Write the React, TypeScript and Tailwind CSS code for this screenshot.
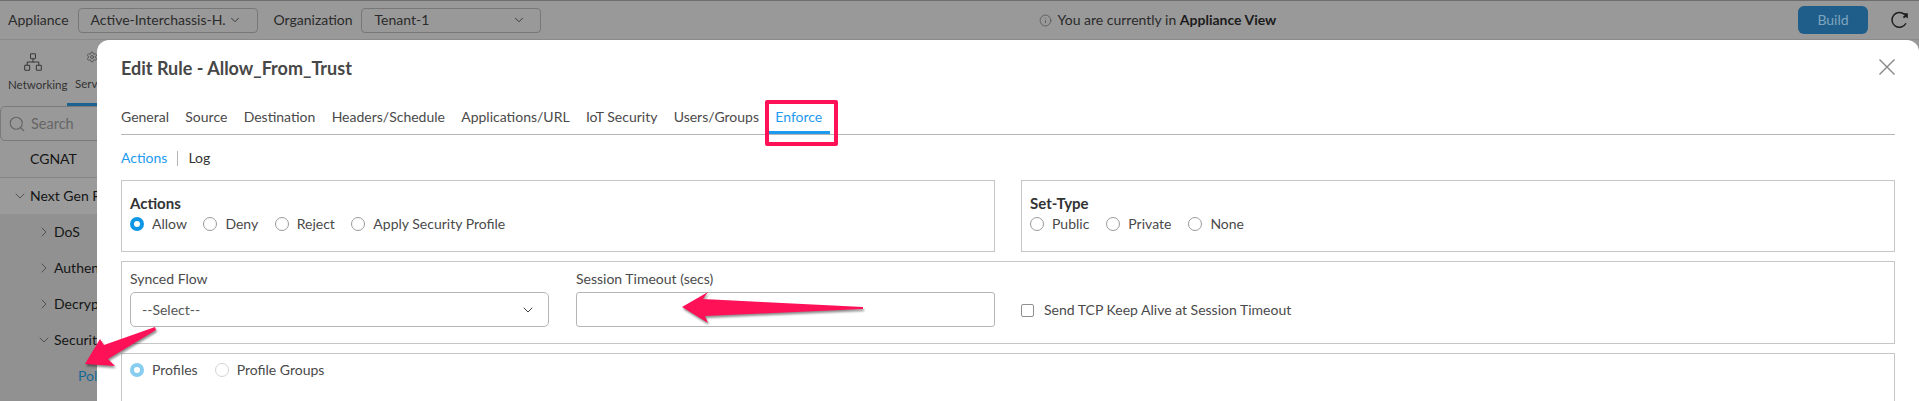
import React from 'react';
import { ChevronDown, ChevronRight, Info, Network, Search, Settings } from 'lucide-react';

const Radio = ({ label, checked, disabled }: { label: string; checked?: boolean; disabled?: boolean }) => (
  <label className="flex items-center gap-2">
    {checked ? (
      <span className={`flex h-3.5 w-3.5 items-center justify-center rounded-full ${disabled ? 'bg-[#87cdf0]' : 'bg-[#0f97e6]'}`}>
        <span className="h-[6px] w-[6px] rounded-full bg-white" />
      </span>
    ) : (
      <span className={`h-3.5 w-3.5 rounded-full border bg-white ${disabled ? 'border-[#d4d4d4]' : 'border-[#9a9a9a]'}`} />
    )}
    <span className="text-[#4a4a4a]">{label}</span>
  </label>
);

const SideRow = ({ label, open, indent }: { label: string; open?: boolean; indent?: boolean }) => (
  <div className={`flex h-9 items-center whitespace-nowrap text-[#151515] ${indent ? 'pl-[36px]' : 'pl-[12px]'}`}>
    {open ? (
      <ChevronDown className="mr-[2px] h-4 w-4 shrink-0 text-[#444]" strokeWidth={1.25} />
    ) : (
      <ChevronRight className="mr-[2px] h-4 w-4 shrink-0 text-[#444]" strokeWidth={1.25} />
    )}
    {label}
  </div>
);

const tabs = ['General', 'Source', 'Destination', 'Headers/Schedule', 'Applications/URL', 'IoT Security', 'Users/Groups'];

export default function App() {
  return (
    <div className="relative h-[401px] w-full overflow-hidden bg-[#999999] font-['Lato',sans-serif] text-[14px] leading-5">
      {/* page behind the dialog */}
      <header className="flex h-10 items-center border-t border-t-[#6e6e6e] border-b border-b-[#8a8a8a] pl-2 pr-[10px] text-[#2b2b2b]">
        <span>Appliance</span>
        <div className="ml-[9px] flex h-[25px] w-[180px] items-center justify-between rounded border border-[#777] pl-[12px] pr-[15px]">
          <span>Active-Interchassis-H.</span>
          <ChevronDown className="h-[14px] w-[14px]" strokeWidth={1.5} />
        </div>
        <span className="ml-4">Organization</span>
        <div className="ml-2 flex h-[25px] w-[180px] items-center justify-between rounded border border-[#777] pl-[13px] pr-[14px]">
          <span>Tenant-1</span>
          <ChevronDown className="h-[14px] w-[14px]" strokeWidth={1.5} />
        </div>
        <div className="ml-[498px] flex items-center gap-[6px]">
          <Info className="h-[13px] w-[13px] text-[#555]" strokeWidth={1.5} />
          <span>
            You are currently in <b className="font-bold text-[#1c1c1c]">Appliance View</b>
          </span>
        </div>
        <button className="ml-auto flex h-7 w-[70px] items-center justify-center rounded-md bg-[#1f5e8a] text-[#7fa5bd]">Build</button>
        <svg className="ml-[22px] h-[18px] w-[19px]" viewBox="0 0 19 18" fill="none">
          <path d="M14.6 3.6A7.4 7.4 0 1 0 16 12.2" stroke="#1d1d1d" strokeWidth="1.4" />
          <path d="M12.4 2.2h5.4v5.4l-1.9-1.7-2 1.3-1-1.2 1.9-1.9z" fill="#1d1d1d" />
        </svg>
      </header>

      <aside className="flex h-[361px] w-[97px] flex-col overflow-hidden">
        <div className="flex h-[66px] shrink-0 text-[11.5px]">
          <div className="flex w-[67px] shrink-0 flex-col pl-[8px] pt-[12px] text-[#333]">
            <Network className="ml-[15px] h-[20px] w-[20px] text-[#3a3a3a]" strokeWidth={1.25} />
            <span className="mt-[3px]">Networking</span>
          </div>
          <div className="flex w-[80px] shrink-0 flex-col border-b-[3px] border-b-[#1d6190] pl-[8px] pt-[11px] text-[#333]">
            <Settings className="ml-[11px] h-[12px] w-[12px] text-[#444]" strokeWidth={1.5} />
            <span className="mt-[11px]">Services</span>
          </div>
        </div>
        <div className="flex h-[35px] w-[200px] shrink-0 items-center rounded-[5px] border border-[#7a7a7a] pl-[7px] text-[14.5px] text-[#666]">
          <Search className="h-[18px] w-[18px] text-[#666]" strokeWidth={1.5} />
          <span className="ml-[5px]">Search</span>
        </div>
        <div className="flex h-[37px] shrink-0 items-center border-b border-b-[#868686] pl-[30px] text-[#151515]">CGNAT</div>
        <div className="flex flex-1 flex-col">
          <div className="bg-[#9b9b9b]">
            <SideRow label="Next Gen Firewall" open />
          </div>
          <div className="flex-1 bg-[#919191]">
            <SideRow label="DoS" indent />
            <SideRow label="Authentication" indent />
            <SideRow label="Decryption" indent />
            <SideRow label="Security" indent open />
            <div className="flex h-9 items-center pl-[78px] text-[#176a97]">Policies</div>
          </div>
        </div>
      </aside>

      {/* dialog */}
      <section className="absolute bottom-0 left-[97px] right-0 top-10 overflow-hidden rounded-t-[12px] bg-white px-6">
        <div className="flex h-10 items-end justify-between">
          <h2 className="text-[18px] font-bold leading-6 text-[#474747]">Edit Rule - Allow_From_Trust</h2>
          <svg className="mb-[5px] h-4 w-4" viewBox="0 0 16 16" fill="none" stroke="#868686" strokeWidth="1.4">
            <path d="M.5.5l15 15M15.5.5l-15 15" />
          </svg>
        </div>
        <nav className="mt-5 flex h-[35px] border-b border-b-[#b5b5b5] text-[#4a4a4a]">
          {tabs.map((t) => (
            <span key={t} className="mr-[16.3px] whitespace-nowrap pt-[7px]">
              {t}
            </span>
          ))}
          <span className="-ml-[8px] h-[34px] border-b-[3px] border-b-[#1e9bf0] px-2 pt-[7px] text-[#1e9bf0]">Enforce</span>
        </nav>
        <div className="mt-[13px] flex h-5 items-center">
          <span className="text-[#1e9bf0]">Actions</span>
          <span className="mx-[10px] h-[15px] w-px bg-[#b5b5b5]" />
          <span className="text-[#333]">Log</span>
        </div>
        <div className="mt-[12px] grid grid-cols-2 gap-[26px]">
          <div className="h-[72px] border border-[#c6c6c6] pl-2 pt-[12px]">
            <h3 className="text-[15px] font-bold text-[#333]">Actions</h3>
            <div className="mt-px flex gap-[16.5px]">
              <Radio label="Allow" checked />
              <Radio label="Deny" />
              <Radio label="Reject" />
              <Radio label="Apply Security Profile" />
            </div>
          </div>
          <div className="h-[72px] border border-[#c6c6c6] pl-2 pt-[12px]">
            <h3 className="text-[15px] font-bold text-[#333]">Set-Type</h3>
            <div className="mt-px flex gap-[17px]">
              <Radio label="Public" />
              <Radio label="Private" />
              <Radio label="None" />
            </div>
          </div>
        </div>
        <div className="mt-[9px] flex h-[83px] items-start border border-[#c6c6c6] pl-2 pt-[7px] text-[#4a4a4a]">
          <div className="w-[419px]">
            <div>Synced Flow</div>
            <div className="mt-[3px] flex h-[35px] items-center justify-between rounded-[5px] border border-[#b5b5b5] pl-[11px] pr-[12px] text-[#555]">
              <span>--Select--</span>
              <ChevronDown className="h-[16px] w-[16px] text-[#444]" strokeWidth={1.5} />
            </div>
          </div>
          <div className="ml-[27px] w-[419px]">
            <div>Session Timeout (secs)</div>
            <div className="mt-[3px] h-[35px] rounded-[3px] border border-[#b5b5b5]" />
          </div>
          <label className="ml-[26px] mt-[31px] flex items-center gap-[10px]">
            <span className="h-[13px] w-[13px] rounded-[2px] border border-[#8f8f8f]" />
            <span>Send TCP Keep Alive at Session Timeout</span>
          </label>
        </div>
        <div className="mt-[9px] h-[80px] border border-[#c6c6c6] pl-2 pt-[6px]">
          <div className="flex gap-[17px]">
            <Radio label="Profiles" checked disabled />
            <Radio label="Profile Groups" disabled />
          </div>
        </div>
      </section>

      {/* annotations drawn on top of the screenshot */}
      <div className="absolute left-[765px] top-[100px] h-[46px] w-[73px] rounded-[2px] border-4 border-[#ff1158]" />
      <svg className="absolute inset-0 h-[401px] w-[1919px] drop-shadow-[1px_2px_1px_rgba(0,0,0,0.45)]" viewBox="0 0 1919 401">
        <path d="M682 307L708 292L703 299L863 307V309L705 316L708 323Z" fill="#ff1158" />
        <path d="M85 364L100 339L104 345L155 327L156 330L108 359L115 366Z" fill="#ff1158" />
      </svg>
    </div>
  );
}
